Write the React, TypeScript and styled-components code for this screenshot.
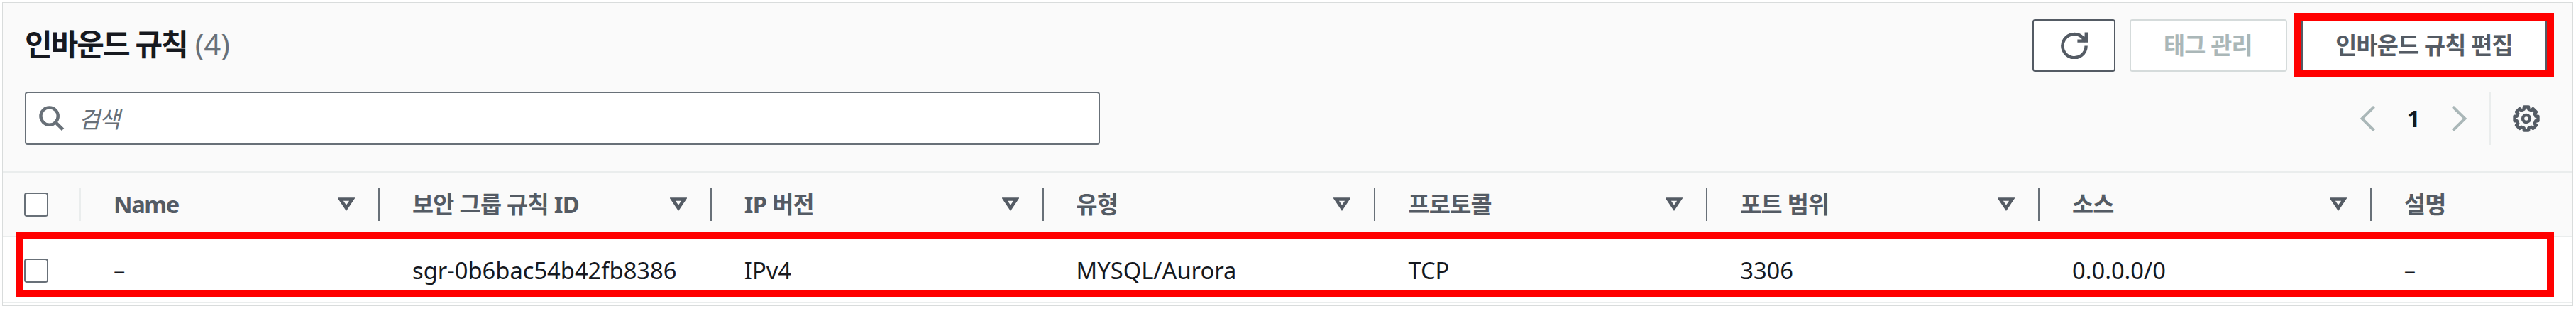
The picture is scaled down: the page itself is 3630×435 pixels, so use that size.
import React from 'react'
import styled, { createGlobalStyle } from 'styled-components'

const columns = ['Name', '보안 그룹 규칙 ID', 'IP 버전', '유형', '프로토콜', '포트 범위', '소스', '설명']

const rules = [
  ['–', 'sgr-0b6bac54b42fb8386', 'IPv4', 'MYSQL/Aurora', 'TCP', '3306', '0.0.0.0/0', '–'],
]

// eight teeth, each with a flat top and a flat valley
const gearPoints = Array.from({ length: 8 }, (_, i) => i * 45)
  .flatMap((angle) => [
    [angle - 14, 13.6],
    [angle - 11, 16.8],
    [angle + 11, 16.8],
    [angle + 14, 13.6],
  ])
  .map(([angle, r]) => {
    const rad = (angle * Math.PI) / 180
    return `${(19 + r * Math.cos(rad)).toFixed(2)},${(19 + r * Math.sin(rad)).toFixed(2)}`
  })
  .join(' ')

const RefreshIcon = () => (
  <svg width="38" height="38" viewBox="0 0 38 38" fill="none" stroke="currentColor" strokeWidth="4.4">
    <path d="M35.6 19.6A16.6 16.6 0 1 1 31.4 8.6L35 13" />
    <path d="M35.8 .6V12.6H23.4" />
    <path d="M35 5V12H28Z" fill="currentColor" stroke="none" />
  </svg>
)

const SearchIcon = () => (
  <svg width="36" height="36" viewBox="0 0 36 36" fill="none" stroke="currentColor" strokeWidth="4.4">
    <circle cx="14.6" cy="14.6" r="12.2" />
    <path d="M23.4 23.4L33.6 33.4" strokeWidth="4.8" />
  </svg>
)

const GearIcon = () => (
  <svg width="38" height="38" viewBox="0 0 38 38" fill="none" stroke="currentColor" strokeWidth="4.4">
    <polygon points={gearPoints} strokeLinejoin="round" />
    <circle cx="19" cy="19" r="5" />
  </svg>
)

const ChevronIcon = ({ flipped }: { flipped?: boolean }) => (
  <svg width="22" height="36" viewBox="0 0 22 36" fill="none" stroke="currentColor" strokeWidth="4">
    <path d={flipped ? 'M1.5 1.3L18.5 18L1.5 34.7' : 'M20.5 1.3L3.5 18L20.5 34.7'} />
  </svg>
)

const SortIcon = () => (
  <svg width="24" height="19" viewBox="0 0 24 19" fill="none" stroke="currentColor" strokeWidth="4.6">
    <path d="M3.6 2.5H20.4L12 14.8Z" />
  </svg>
)

function App() {
  return (
    <>
      <GlobalStyle />
      <Panel>
        <Header>
          <TitleRow>
            <Title>
              인바운드 규칙 <Counter>(4)</Counter>
            </Title>
            <Actions>
              <Button $width={117} aria-label="refresh">
                <RefreshIcon />
              </Button>
              <Button $width={222} disabled>
                태그 관리
              </Button>
              <Button $width={348} $highlighted>
                인바운드 규칙 편집
                <ButtonHighlight />
              </Button>
            </Actions>
          </TitleRow>
          <FilterRow>
            <SearchBox>
              <SearchIcon />
              <Placeholder>검색</Placeholder>
            </SearchBox>
            <Pagination>
              <ChevronIcon />
              <PageNumber>1</PageNumber>
              <ChevronIcon flipped />
              <Preferences>
                <GearIcon />
              </Preferences>
            </Pagination>
          </FilterRow>
        </Header>
        <HeadRow>
          <SelectCell>
            <Checkbox />
            <Divider $light />
          </SelectCell>
          {columns.map((column, i) => (
            <HeadCell key={column}>
              <Label $latin={column === 'Name'}>{column}</Label>
              {i < columns.length - 1 && (
                <>
                  <SortIcon />
                  <Divider />
                </>
              )}
            </HeadCell>
          ))}
        </HeadRow>
        {rules.map((rule) => (
          <BodyRow key={rule[1]}>
            <SelectCell>
              <Checkbox $lowered />
            </SelectCell>
            {rule.map((value, i) => (
              <BodyCell key={i}>{value}</BodyCell>
            ))}
            <RowHighlight />
          </BodyRow>
        ))}
      </Panel>
    </>
  )
}

const GlobalStyle = createGlobalStyle`
  * {
    box-sizing: border-box;
  }
  body {
    margin: 0;
    background: #fff;
    color: #16191f;
    font-family: 'Noto Sans', 'Noto Sans CJK KR', sans-serif;
    font-size: 32.7px;
    line-height: 46px;
  }
  svg {
    display: block;
    flex: none;
  }
`
const Panel = styled.section`
  margin: 3px 4px 0 3px;
  height: 428px;
  border: 1px solid #d9dcdc;
  background: #fff;
`
const Header = styled.header`
  height: 239px;
  padding: 23px 35px 0 31px;
  background: #fafafa;
  border-bottom: 2px solid #eaeded;
`
const TitleRow = styled.div`
  display: flex;
  justify-content: space-between;
  height: 74px;
`
const Title = styled.h2`
  margin: 0;
  font-size: 42px;
  font-weight: 700;
  line-height: 70px;
  letter-spacing: -2px;
`
const Counter = styled.span`
  margin-left: 2px;
  color: #687078;
  font-weight: 400;
  letter-spacing: 0;
`
const Actions = styled.div`
  display: flex;
  gap: 19.5px;
`
const Button = styled.button<{ $width: number; $highlighted?: boolean }>`
  position: relative;
  display: flex;
  align-items: center;
  justify-content: center;
  width: ${({ $width }) => $width}px;
  height: 74px;
  padding: 0;
  border: ${({ $highlighted }) => ($highlighted ? 3 : 2)}px solid #545b64;
  border-radius: 4px;
  background: #fff;
  color: #545b64;
  font: inherit;
  font-weight: 700;
  letter-spacing: -0.8px;
  white-space: nowrap;

  &:disabled {
    border-color: #d5dbdb;
    color: #aab7b8;
  }
`
const ButtonHighlight = styled.span`
  position: absolute;
  inset: -11px -12px;
  border: 10px solid #f00;
`
const FilterRow = styled.div`
  display: flex;
  justify-content: space-between;
  margin-top: 28px;
  height: 75px;
`
const SearchBox = styled.div`
  display: flex;
  align-items: center;
  gap: 20px;
  width: 1515px;
  padding-left: 18px;
  border: 2px solid #687078;
  border-radius: 4px;
  background: #fff;
  color: #687078;
`
const Placeholder = styled.span`
  margin-top: 2px;
  font-style: italic;
  letter-spacing: -1.5px;
`
const Pagination = styled.div`
  display: flex;
  align-items: center;
  color: #aab7b8;
`
const PageNumber = styled.span`
  width: 108px;
  color: #16191f;
  font-weight: 700;
  text-align: center;
`
const Preferences = styled.div`
  display: flex;
  align-items: center;
  height: 75px;
  margin-left: 31px;
  padding: 0 11px 0 31px;
  border-left: 2px solid #eaeded;
  color: #545b64;
`
const Row = styled.div`
  display: grid;
  grid-template-columns: 110px 421px repeat(6, 467.8px) 1fr;
  align-items: center;
  border-bottom: 2px solid #eaeded;
`
const HeadRow = styled(Row)`
  height: 91px;
  background: #fafafa;
  color: #545b64;
`
const BodyRow = styled(Row)`
  position: relative;
  height: 93px;
`
const SelectCell = styled.div`
  display: flex;
  align-items: center;
  justify-content: space-between;
  padding-left: 30px;
`
const Checkbox = styled.span<{ $lowered?: boolean }>`
  width: 34px;
  height: 34px;
  margin-top: ${({ $lowered }) => ($lowered ? 3 : 0)}px;
  border: 2px solid #687078;
  border-radius: 4px;
  background: #fff;
`
const HeadCell = styled.div`
  display: flex;
  align-items: center;
  padding-left: 46px;
  font-weight: 700;
`
const Label = styled.span<{ $latin?: boolean }>`
  flex: 1;
  letter-spacing: ${({ $latin }) => ($latin ? -1.4 : -0.7)}px;
`
const Divider = styled.span<{ $light?: boolean }>`
  width: 2px;
  height: 46px;
  margin-left: 33px;
  background: ${({ $light }) => ($light ? '#eaeded' : '#687078')};
`
const BodyCell = styled.div`
  padding: 2px 0 0 46px;
`
const RowHighlight = styled.div`
  position: absolute;
  inset: -7px 26px 7px 18px;
  border: 10px solid #f00;
`

export default App
